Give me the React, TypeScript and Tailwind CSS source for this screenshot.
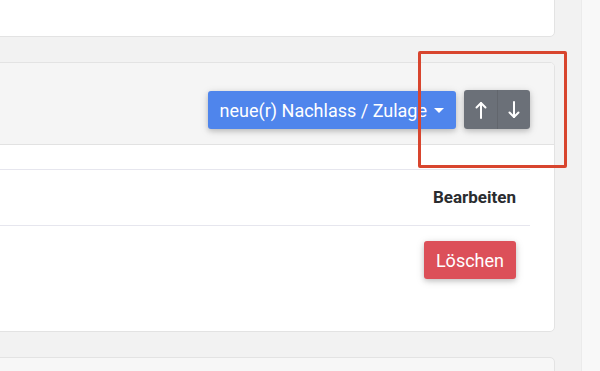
import React from 'react';

const shadow = 'shadow-[0_2px_5px_0_rgba(0,0,0,0.16),0_2px_10px_0_rgba(0,0,0,0.12)]';

const Arrow = ({ down }: { down?: boolean }) => (
  <svg width="12" height="18" viewBox="0 0 12 18" fill="none" stroke="currentColor" strokeWidth="2" strokeLinecap="round" strokeLinejoin="round" className={down ? 'rotate-180' : ''}>
    <path d="M6 17V2" />
    <path d="M1.5 6.5L6 2l4.5 4.5" />
  </svg>
);

export default function App() {
  return (
    <div
      className="relative flex h-[371px] w-[600px] overflow-hidden bg-[#f2f2f2]"
      style={{ fontFamily: 'Roboto, "Liberation Sans", sans-serif' }}
    >
      {/* Hauptspalte */}
      <div className="flex w-[581px] flex-col gap-[25px] pr-[26px]">
        {/* obere Karte */}
        <div className="-ml-4 -mt-3 h-[49px] shrink-0 rounded-[5px] border border-[#e3e3e3] bg-white" />

        {/* Karte mit Nachlässen */}
        <div className="-ml-4 flex h-[270px] shrink-0 flex-col overflow-hidden rounded-[5px] border border-[#e3e3e3] bg-white">
          <div className="flex h-[82px] shrink-0 items-end justify-end gap-2 border-b border-[#e2e2e2] bg-[#f5f5f5] pb-[15px] pr-[24px]">
            <button className={`flex h-[38px] items-center gap-[7px] rounded-[3px] bg-[#4f85ec] pl-[12px] pr-[12px] text-[18px] text-white ${shadow}`}>
              neue(r) Nachlass / Zulage
              <span className="mt-[1px] h-0 w-0 border-x-[5px] border-t-[5px] border-x-transparent border-t-white" />
            </button>
            <div className={`flex h-[39px] rounded-[3px] ${shadow}`}>
              <button className="flex w-[33px] items-center justify-center rounded-l-[3px] bg-[#6b7078] text-white">
                <Arrow />
              </button>
              <button className="flex w-[33px] items-center justify-center rounded-r-[3px] border-l border-[#62666d] bg-[#6b7078] text-white">
                <Arrow down />
              </button>
            </div>
          </div>

          <div className="pr-[24px] pt-[24px]">
            <div className="border-t border-[#e6e6ee]">
              <div className="flex h-[56px] items-center justify-end border-b border-[#e6e6ee] pr-[14px] text-[17px] font-bold text-[#2a2c2f]">
                Bearbeiten
              </div>
              <div className="flex justify-end pr-[14px] pt-[15px]">
                <button className={`h-[38px] rounded-[3px] bg-[#dc5059] px-[12px] text-[18px] text-white ${shadow}`}>
                  Löschen
                </button>
              </div>
            </div>
          </div>
        </div>

        {/* untere Karte */}
        <div className="-ml-4 h-[60px] shrink-0 rounded-[5px] border border-[#e3e3e3] bg-white/40" />
      </div>

      {/* rechter Rand */}
      <div className="w-[19px] border-l border-[#ebebeb] bg-[#f8f8f8]" />

      {/* rote Markierung */}
      <div className="pointer-events-none absolute left-[418px] top-[51px] h-[117px] w-[149px] rounded-[2px] border-[3px] border-[#d8452e]" />
    </div>
  );
}
